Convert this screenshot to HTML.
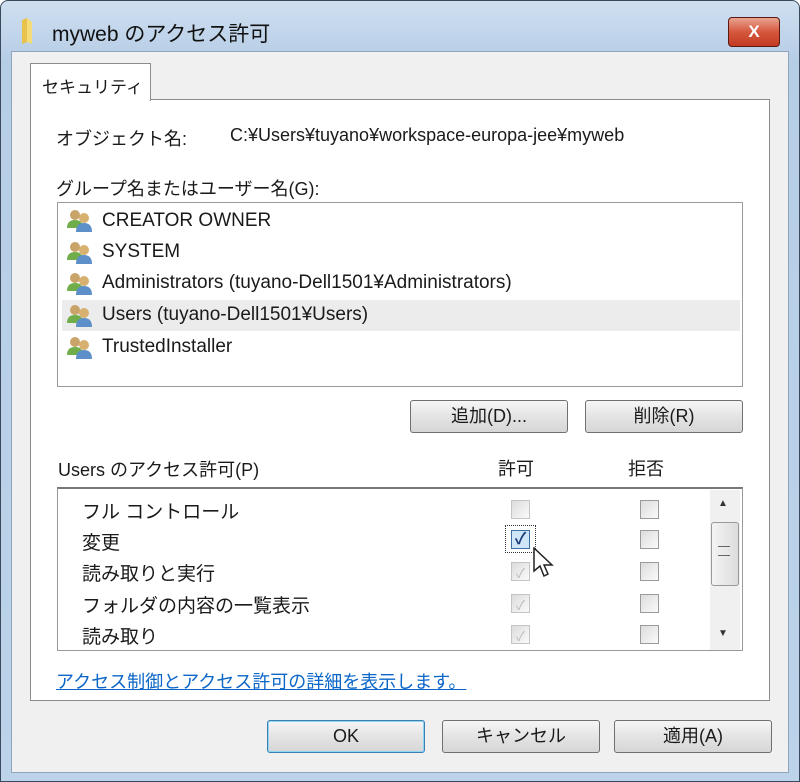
<!DOCTYPE html>
<html><head><meta charset="utf-8"><style>
*{margin:0;padding:0;box-sizing:border-box}
body{width:800px;height:782px;overflow:hidden;background:#fff;font-family:"Liberation Sans","Noto Sans CJK JP",sans-serif;color:#1a1a1a}
.a{position:absolute;white-space:nowrap}
#win{position:absolute;left:0;top:0;width:800px;height:782px;border:1px solid #3a4a5c;border-radius:8px 8px 0 0;background:linear-gradient(#cfdff0,#b6cde6 60px,#bcd3ea);}
#inner{position:absolute;left:11px;top:51px;width:778px;height:722px;background:#f0f0f0;border:1px solid #8fa4bc}
#panel{position:absolute;left:30px;top:99px;width:740px;height:602px;background:#fff;border:1px solid #8c8c8c}
.tab{position:absolute;left:30px;top:63px;width:121px;height:38px;background:#fff;border:1px solid #8c8c8c;border-bottom:none;font-size:17px;padding:9px 0 0 11px}
.box{position:absolute;background:#fff;border:1px solid #9a9a9a}
.btn{position:absolute;height:33px;border:1px solid #707070;border-radius:3px;background:linear-gradient(#f6f6f6,#e4e4e4 50%,#d6d6d6);font-size:18px;text-align:center;line-height:31px}
.it{position:absolute;left:102px;font-size:19px}
.ic{position:absolute;left:66px;width:30px;height:24px}
.cb{position:absolute;width:19px;height:19px;border:1px solid #9a9a9a;background:linear-gradient(135deg,#dcdcdc,#fafafa)}
.cb.d{border-color:#c4c4c4}
.pl{position:absolute;left:82px;font-size:19px}
</style></head><body>
<div id="win"></div>
<svg class="a" style="left:18px;top:16px" width="24" height="30"><path d="M4 4 L9 2 L9 26 L4 28Z" fill="#e8c24a"/><path d="M9 2 L14 6 L14 28 L9 26Z" fill="#f5dc7a"/></svg>
<div class="a" style="left:52px;top:18px;font-size:21px;color:#111">myweb のアクセス許可</div>
<div class="a" style="left:728px;top:17px;width:52px;height:30px;border:1px solid #5a1a12;border-radius:4px;background:linear-gradient(#e9a390,#d5573d 50%,#c23a22);color:#fff;font-weight:bold;font-size:17px;text-align:center;line-height:27px">X</div>
<div id="inner"></div>
<div id="panel"></div>
<div class="tab">セキュリティ</div>
<div class="a" style="left:56px;top:125px;font-size:18px">オブジェクト名:</div>
<div class="a" style="left:230px;top:125px;font-size:18px">C:¥Users¥tuyano¥workspace-europa-jee¥myweb</div>
<div class="a" style="left:56px;top:175px;font-size:18px">グループ名またはユーザー名(G):</div>
<div class="box" style="left:57px;top:202px;width:686px;height:185px"></div>
<div class="a" style="left:62px;top:300px;width:678px;height:31px;background:#ececec"></div>
<svg width="0" height="0" style="position:absolute"><defs><g id="u"><circle cx="9" cy="7" r="5" fill="#c8a46a"/><path d="M1 20 Q1 12 9 12 Q17 12 17 20Z" fill="#6fae4a"/><circle cx="18" cy="10" r="5" fill="#d8b070"/><path d="M10 24 Q10 15 18 15 Q26 15 26 24Z" fill="#5d8fc9"/></g></defs></svg>
<svg class="ic" style="top:208px"><use href="#u"/></svg><div class="it" style="top:210px">CREATOR OWNER</div>
<svg class="ic" style="top:240px"><use href="#u"/></svg><div class="it" style="top:241px">SYSTEM</div>
<svg class="ic" style="top:271px"><use href="#u"/></svg><div class="it" style="top:272px">Administrators (tuyano-Dell1501¥Administrators)</div>
<svg class="ic" style="top:303px"><use href="#u"/></svg><div class="it" style="top:304px">Users (tuyano-Dell1501¥Users)</div>
<svg class="ic" style="top:335px"><use href="#u"/></svg><div class="it" style="top:336px">TrustedInstaller</div>
<div class="btn" style="left:410px;top:400px;width:158px">追加(D)...</div>
<div class="btn" style="left:585px;top:400px;width:158px">削除(R)</div>
<div class="a" style="left:58px;top:456px;font-size:18px">Users のアクセス許可(P)</div>
<div class="a" style="left:498px;top:455px;font-size:18px">許可</div>
<div class="a" style="left:628px;top:455px;font-size:18px">拒否</div>
<div class="box" style="left:57px;top:487px;width:686px;height:164px;border-top:2px solid #777"></div>
<div class="a" style="left:710px;top:490px;width:30px;height:160px;background:#f0f0f0"></div>
<div class="a" style="left:718px;top:498px;font-size:10px;color:#333">▲</div>
<div class="a" style="left:718px;top:628px;font-size:10px;color:#333">▼</div>
<div class="a" style="left:711px;top:522px;width:28px;height:64px;border:1px solid #999;border-radius:3px;background:linear-gradient(90deg,#f4f4f4,#dcdcdc)"></div>
<div class="a" style="left:718px;top:546px;width:12px;height:10px;border-top:1px solid #666;border-bottom:1px solid #666"></div>
<div class="pl" style="top:497px">フル コントロール</div>
<div class="pl" style="top:528px">変更</div>
<div class="pl" style="top:559px">読み取りと実行</div>
<div class="pl" style="top:591px">フォルダの内容の一覧表示</div>
<div class="pl" style="top:622px">読み取り</div>
<div class="cb d" style="left:511px;top:500px"></div>
<div class="a" style="left:505px;top:525px;width:31px;height:28px;border:1px dotted #333"></div>
<div class="cb" style="left:511px;top:530px;background:#cfe6f8;border-color:#3a6ea5;color:#1a3c7a;font-size:16px;line-height:17px;text-align:center;font-weight:bold">✓</div>
<div class="cb d" style="left:511px;top:562px;color:#bbb;font-size:13px;text-align:center">✓</div>
<div class="cb d" style="left:511px;top:594px;color:#bbb;font-size:13px;text-align:center">✓</div>
<div class="cb d" style="left:511px;top:625px;color:#bbb;font-size:13px;text-align:center">✓</div>
<div class="cb" style="left:640px;top:500px"></div>
<div class="cb" style="left:640px;top:530px"></div>
<div class="cb" style="left:640px;top:562px"></div>
<div class="cb" style="left:640px;top:594px"></div>
<div class="cb" style="left:640px;top:625px"></div>
<svg class="a" style="left:533px;top:547px" width="24" height="34"><path d="M1 1 L1 24 L7 19 L11 29 L15 27 L11 18 L19 18Z" fill="#fff" stroke="#222" stroke-width="1.5"/></svg>
<div class="a" style="left:56px;top:668px;font-size:18px;color:#0b66c8;text-decoration:underline">アクセス制御とアクセス許可の詳細を表示します。</div>
<div class="btn" style="left:267px;top:720px;width:158px;border-color:#3c7fb1;box-shadow:inset 0 0 0 1px #8fd3f5">OK</div>
<div class="btn" style="left:442px;top:720px;width:158px">キャンセル</div>
<div class="btn" style="left:614px;top:720px;width:158px">適用(A)</div>
</body></html>
